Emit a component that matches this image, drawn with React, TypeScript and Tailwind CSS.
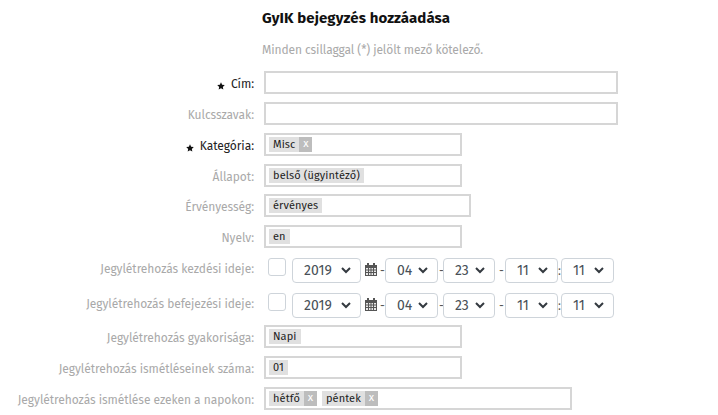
import type { ReactNode } from "react";

const font = { fontFamily: '"Fira Sans", "Noto Sans", sans-serif' };

function Star() {
  return (
    <svg width="8" height="8" viewBox="0 0 24 24" className="mr-[6px] mt-[4px] shrink-0 text-[#111]">
      <path fill="currentColor" d="M12 1l3.4 7.3 7.9 1-5.8 5.4 1.5 7.8L12 18.6l-7 3.9 1.5-7.8L.7 9.3l7.900-1z" />
    </svg>
  );
}

function Row({
  label,
  required,
  width,
  className,
  children,
}: {
  label: string;
  required?: boolean;
  width: string;
  className?: string;
  children?: ReactNode;
}) {
  return (
    <div className={`flex items-center ${className ?? ""}`}>
      <div
        className={`flex h-[23px] w-[254px] shrink-0 items-center justify-end pt-[2px] text-[12px] tracking-[-0.05px] ${
          required ? "text-[#222]" : "text-[#a9a9a9]"
        }`}
      >
        {required && <Star />}
        {label}:
      </div>
      <div
        className={`ml-[10px] flex h-[23px] items-center gap-[5px] border-2 border-[#d6d6d6] bg-white pl-[3px] ${width}`}
      >
        {children}
      </div>
    </div>
  );
}

function Tag({ text, remove }: { text: string; remove?: boolean }) {
  return (
    <span className="flex h-[15px] items-center bg-[#e0e0e0] text-[11px] leading-none tracking-[0.1px] text-[#222]">
      <span className="px-[4px]">{text}</span>
      {remove && (
        <span className="flex h-[15px] w-[13px] items-center justify-center bg-[#bdbdbd] pb-[2px] text-[11px] text-white">
          x
        </span>
      )}
    </span>
  );
}

function Select({ value, width }: { value: string; width: string }) {
  return (
    <div
      className={`flex h-[25px] items-center justify-between rounded-[4px] border border-[#ced4da] bg-white pl-[11px] pr-[9px] text-[14px] text-[#495057] ${width}`}
    >
      <span>{value}</span>
      <svg width="10" height="7" viewBox="0 0 10 7" fill="none" stroke="#343a40" strokeWidth="2">
        <path d="M1 1l4 4 4-4" />
      </svg>
    </div>
  );
}

function Calendar() {
  return (
    <svg width="12" height="13" viewBox="0 0 12 13" className="ml-[4px] mb-[3px] shrink-0 text-[#555]">
      <path fill="currentColor" d="M2 0h2v2h4V0h2v2h2v11H0V2h2z" />
      <path
        fill="#e8e8e8"
        d="M1 5h2v1.500H1zM4 5h1.500v1.500H4zM6.500 5H8v1.500H6.500zM9 5h2v1.500H9zM1 7.500h2V9H1zM4 7.500h1.500V9H4zM6.500 7.500H8V9H6.500zM9 7.500h2V9H9zM1 10h2v2H1zM4 10h1.500v2H4zM6.500 10H8v2H6.500zM9 10h2v2H9z"
      />
    </svg>
  );
}

function DateRow({ label, className }: { label: string; className?: string }) {
  return (
    <div className={`flex items-start ${className ?? ""}`}>
      <div className="flex h-[22px] w-[254px] shrink-0 items-center justify-end text-[12px] tracking-[-0.05px] text-[#a9a9a9]">
        {label}:
      </div>
      <div className="ml-[14px] mr-[6px] h-[18px] w-[18px] shrink-0 rounded-[3px] border border-[#ced4da] bg-white" />
      <div className="flex items-center text-[12px] text-[#555]">
        <Select value="2019" width="w-[69px]" />
        <Calendar />
        <span className="w-[8px] pl-[3px]">-</span>
        <Select value="04" width="w-[53px]" />
        <span className="w-[5px] pl-[1px]">-</span>
        <Select value="23" width="w-[52px]" />
        <span className="w-[10px] pl-[4px]">-</span>
        <Select value="11" width="w-[53px]" />
        <span className="w-[3px]">:</span>
        <Select value="11" width="w-[53px]" />
      </div>
    </div>
  );
}

export default function App() {
  return (
    <div className="h-[415px] w-[718px] overflow-hidden bg-white" style={font}>
      <h1 className="pl-[262px] pt-[9px] text-[15px] font-bold leading-[19px] tracking-[0.08px] text-[#111]">
        GyIK bejegyzés hozzáadása
      </h1>
      <p className="mt-[14px] pl-[262px] text-[12px] leading-[17px] tracking-[-0.1px] text-[#a9a9a9]">
        Minden csillaggal (*) jelölt mező kötelező.
      </p>
      <Row className="mt-[12px]" label="Cím" required width="w-[354px]" />
      <Row className="mt-[8px]" label="Kulcsszavak" width="w-[354px]" />
      <Row className="mt-[8px]" label="Kategória" required width="w-[198px]">
        <Tag text="Misc" remove />
      </Row>
      <Row className="mt-[8px]" label="Állapot" width="w-[198px]">
        <Tag text="belső (ügyintéző)" />
      </Row>
      <Row className="mt-[7px]" label="Érvényesség" width="w-[207px]">
        <Tag text="érvényes" />
      </Row>
      <Row className="mt-[8px]" label="Nyelv" width="w-[198px]">
        <Tag text="en" />
      </Row>
      <DateRow className="mt-[10px]" label="Jegylétrehozás kezdési ideje" />
      <DateRow className="mt-[10px]" label="Jegylétrehozás befejezési ideje" />
      <Row className="mt-[7px]" label="Jegylétrehozás gyakorisága" width="w-[198px]">
        <Tag text="Napi" />
      </Row>
      <Row className="mt-[8px]" label="Jegylétrehozás ismétléseinek száma" width="w-[198px]">
        <Tag text="01" />
      </Row>
      <Row className="mt-[8px]" label="Jegylétrehozás ismétlése ezeken a napokon" width="w-[308px]">
        <Tag text="hétfő" remove />
        <Tag text="péntek" remove />
      </Row>
    </div>
  );
}
